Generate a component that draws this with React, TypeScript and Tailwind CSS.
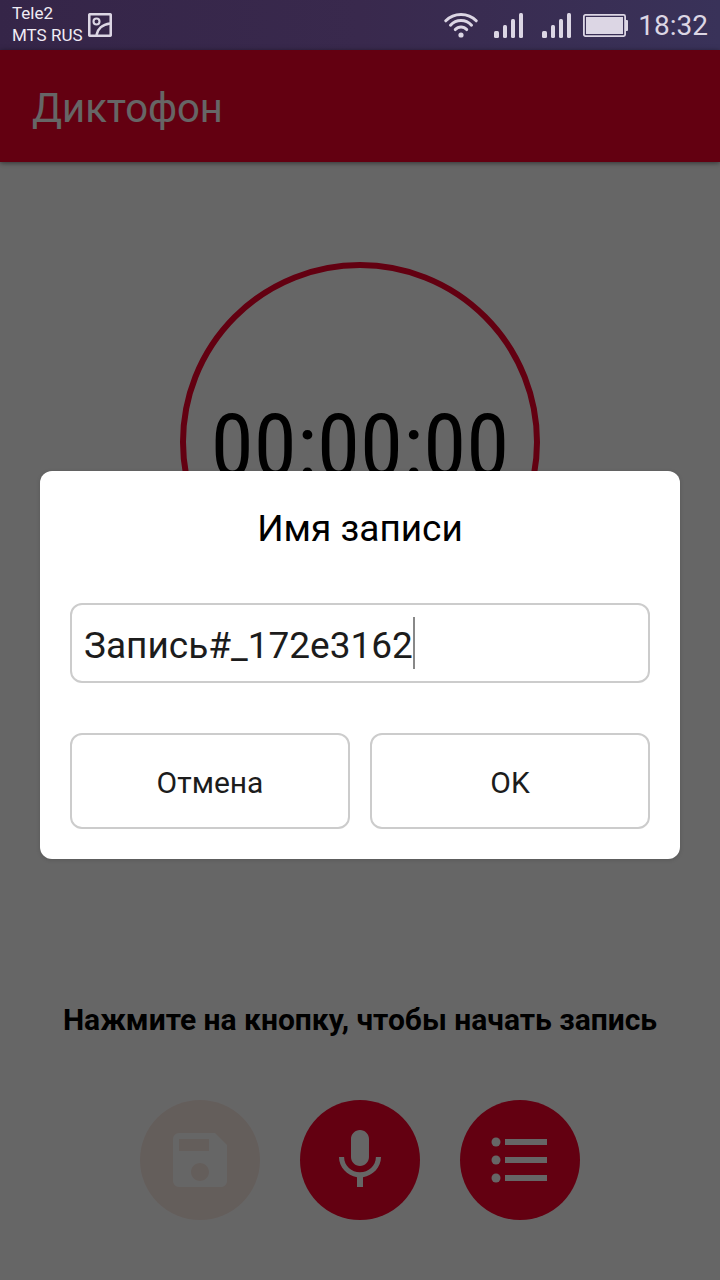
import { useState } from "react";

function PictureIcon() {
  return (
    <svg className="size-6" viewBox="0 0 24 24" fill="none" stroke="currentColor" aria-hidden="true">
      <rect x="1.25" y="1.25" width="21.5" height="21.5" rx="1" strokeWidth="2.6" />
      <circle cx="8.5" cy="8.5" r="3" strokeWidth="2.1" />
      <path d="M8.5 22C9.5 16.5 14 11.5 22 10.5" strokeWidth="2.6" />
    </svg>
  );
}

function WifiIcon() {
  return (
    <svg className="h-[25px] w-[34px]" viewBox="0 0 34 25" fill="none" stroke="currentColor" strokeWidth="3" strokeLinecap="round" aria-hidden="true">
      <path d="M1.8 7.8C10 -.6 24 -.6 32.2 7.8" />
      <path d="M6.5 12.2C12.2 6 21.8 6 27.5 12.2" />
      <path d="M11.3 16.6C14.4 13.1 19.6 13.1 22.7 16.6" />
      <circle cx="17" cy="22" r="2.6" fill="currentColor" stroke="none" />
    </svg>
  );
}

function SignalIcon() {
  return (
    <svg className="h-[25px] w-[30px]" viewBox="0 0 30 25" fill="currentColor" aria-hidden="true">
      <rect x="0" y="18" width="5" height="7" rx="1.5" />
      <rect x="9" y="12" width="4" height="13" rx="1.5" />
      <rect x="17" y="6" width="4" height="19" rx="1.5" />
      <rect x="25" y="0" width="4" height="25" rx="1.5" />
    </svg>
  );
}

function BatteryIcon() {
  return (
    <svg className="h-[23px] w-[45px]" viewBox="0 0 45 23" aria-hidden="true">
      <rect x=".9" y=".9" width="41.2" height="21.2" rx="1.5" fill="none" stroke="currentColor" strokeWidth="1.8" />
      <rect x="3" y="3" width="37" height="17" fill="currentColor" />
      <path d="M43 6h1a1 1 0 0 1 1 1v9a1 1 0 0 1-1 1h-1z" fill="currentColor" />
    </svg>
  );
}

function StatusBar() {
  return (
    <div className="flex h-[50px] items-center bg-linear-to-r from-[#352548] via-[#39294d] to-[#393259] px-3 text-[#dcd6e4]">
      <div className="pb-0.5 text-[17px] leading-[22px] text-[#f0ecf4]">
        <div>Tele2</div>
        <div>MTS RUS</div>
      </div>
      <div className="ml-[5px]">
        <PictureIcon />
      </div>
      <div className="ml-auto flex items-center">
        <WifiIcon />
        <div className="ml-4 flex gap-[18px]">
          <SignalIcon />
          <SignalIcon />
        </div>
        <div className="ml-[11px]">
          <BatteryIcon />
        </div>
        <div className="ml-[10px] pt-0.5 text-[28px] leading-8">18:32</div>
      </div>
    </div>
  );
}

export default function App() {
  const [name, setName] = useState("Запись#_172e3162");

  return (
    <div className="flex min-h-screen flex-col bg-white font-['Roboto',sans-serif]">
      <StatusBar />
      <div className="relative flex flex-1 flex-col">
        <header className="flex h-28 items-center bg-[#f7002b] px-8 pt-1.5 shadow-[0_1px_5px_rgba(0,0,0,0.5)]">
          <h1 className="text-[40px] leading-[44px] text-white">Диктофон</h1>
        </header>

        <main className="flex flex-1 flex-col items-center justify-between pt-[100px] pb-[60px]">
          <div className="flex size-[360px] items-center justify-center rounded-full border-[6px] border-[#f7002b]">
            <time className="pt-2 font-['Roboto_Condensed',sans-serif] text-[87px] leading-[104px] text-black">
              00:00:00
            </time>
          </div>

          <div className="flex flex-col items-center gap-[60px]">
            <p className="text-center text-[30px] leading-10 font-bold text-black">
              Нажмите на кнопку, чтобы начать запись
            </p>
            <div className="flex gap-10">
              <button type="button" aria-label="Сохранить" disabled className="flex size-[120px] items-center justify-center rounded-full bg-[#fbebe4] text-white">
                <svg className="size-[72px]" viewBox="0 0 24 24" fill="currentColor" aria-hidden="true">
                  <path d="M17 3H5a2 2 0 0 0-2 2v14a2 2 0 0 0 2 2h14c1.1 0 2-.9 2-2V7l-4-4zm-5 16c-1.66 0-3-1.34-3-3s1.34-3 3-3 3 1.34 3 3-1.34 3-3 3zm3-10H5V5h10v4z" />
                </svg>
              </button>
              <button type="button" aria-label="Начать запись" className="flex size-[120px] items-center justify-center rounded-full bg-[#f7002b] text-white">
                <svg className="size-[72px]" viewBox="0 0 24 24" fill="currentColor" aria-hidden="true">
                  <path d="M12 14c1.66 0 2.99-1.34 2.99-3L15 5c0-1.66-1.34-3-3-3S9 3.34 9 5v6c0 1.66 1.34 3 3 3zm5.3-3c0 3-2.54 5.1-5.3 5.1S6.7 14 6.7 11H5c0 3.41 2.72 6.23 6 6.72V21h2v-3.28c3.28-.48 6-3.3 6-6.72h-1.7z" />
                </svg>
              </button>
              <button type="button" aria-label="Список записей" className="flex size-[120px] items-center justify-center rounded-full bg-[#f7002b] text-white">
                <svg className="size-[72px]" viewBox="0 0 24 24" fill="currentColor" aria-hidden="true">
                  <circle cx="4" cy="6" r="1.5" />
                  <circle cx="4" cy="12" r="1.5" />
                  <circle cx="4" cy="18" r="1.5" />
                  <path d="M7 5h14v2H7zM7 11h14v2H7zM7 17h14v2H7z" />
                </svg>
              </button>
            </div>
          </div>
        </main>

        <div className="absolute inset-0 flex items-center justify-center bg-black/60 px-10">
          <form
            role="dialog"
            aria-labelledby="record-title"
            onSubmit={(e) => e.preventDefault()}
            className="w-full rounded-xl bg-white px-[30px] pt-9 pb-[30px] shadow-[0_1px_4px_rgba(0,0,0,0.15)]"
          >
            <label id="record-title" htmlFor="record-name" className="block text-center text-[37px] leading-[44px] text-black">
              Имя записи
            </label>
            <div className="relative mt-[52px]">
              <input
                id="record-name"
                type="text"
                value={name}
                onChange={(e) => setName(e.target.value)}
                className="block h-20 w-full rounded-xl border-2 border-[#ccc] bg-white px-3 pt-1 text-[37px] leading-[44px] text-[#1c1c1c] caret-transparent outline-none"
              />
              <span className="absolute top-3.5 left-[343px] h-[52px] w-0.5 bg-[#888]" />
            </div>
            <div className="mt-[50px] grid grid-cols-2 gap-5">
              <button type="button" className="h-24 rounded-xl border-2 border-[#ccc] pt-1 text-[30px] leading-9 text-[#1c1c1c]">
                Отмена
              </button>
              <button type="submit" className="h-24 rounded-xl border-2 border-[#ccc] pt-1 text-[30px] leading-9 text-[#1c1c1c]">
                OK
              </button>
            </div>
          </form>
        </div>
      </div>
    </div>
  );
}
